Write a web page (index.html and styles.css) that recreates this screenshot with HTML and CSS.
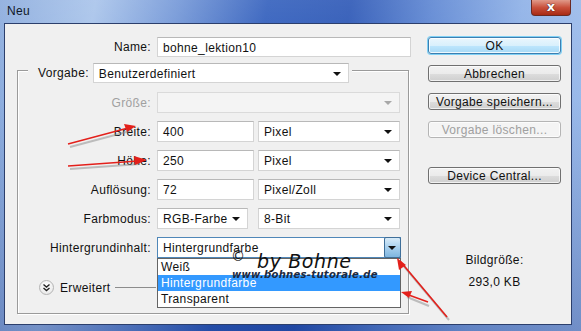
FILE: index.html
```html
<!DOCTYPE html>
<html lang="de">
<head>
  <meta charset="UTF-8">
  <title>Neu</title>
  <link rel="stylesheet" href="styles.css">
</head>
<body>
  <div class="window">
    <div class="titlebar">
      <span class="title">Neu</span>
      <div class="close"><span>x</span></div>
    </div>

    <div class="client">
      <div class="main">
        <div class="row name-row">
          <label class="lbl">Name:</label>
          <div class="input w-name">bohne_lektion10</div>
        </div>

        <div class="preset">
          <div class="preset-head">
            <label>Vorgabe:</label>
            <div class="select w-preset">Benutzerdefiniert<i class="arrow"></i></div>
          </div>

          <div class="fields">
            <div class="row">
              <label class="lbl disabled">Größe:</label>
              <div class="select off w-full"><i class="arrow"></i></div>
            </div>
            <div class="row">
              <label class="lbl">Breite:</label>
              <div class="input w-num">400</div>
              <div class="select w-unit">Pixel<i class="arrow"></i></div>
            </div>
            <div class="row">
              <label class="lbl">Höhe:</label>
              <div class="input w-num">250</div>
              <div class="select w-unit">Pixel<i class="arrow"></i></div>
            </div>
            <div class="row">
              <label class="lbl">Auflösung:</label>
              <div class="input w-num">72</div>
              <div class="select w-unit">Pixel/Zoll<i class="arrow"></i></div>
            </div>
            <div class="row">
              <label class="lbl">Farbmodus:</label>
              <div class="select w-mode">RGB-Farbe<i class="arrow"></i></div>
              <div class="select w-unit w-bit">8-Bit<i class="arrow"></i></div>
            </div>
            <div class="row">
              <label class="lbl">Hintergrundinhalt:</label>
              <div class="select open w-bg">Hintergrundfarbe<span class="drop-btn"><i class="arrow"></i></span>
                <ul class="list">
                  <li>Weiß</li>
                  <li class="sel">Hintergrundfarbe</li>
                  <li>Transparent</li>
                </ul>
              </div>
            </div>
          </div>

          <div class="advanced">
            <span class="chev">
              <svg width="9" height="9" viewBox="0 0 9 9"><path d="M1.5 1.5 L4.5 4 L7.5 1.5 M1.5 5 L4.5 7.5 L7.5 5" fill="none" stroke="#222" stroke-width="1.4"/></svg>
            </span>
            <span>Erweitert</span>
            <span class="rule"></span>
          </div>
        </div>
      </div>

      <div class="side">
        <button class="btn ok">OK</button>
        <button class="btn">Abbrechen</button>
        <button class="btn">Vorgabe speichern...</button>
        <button class="btn" disabled>Vorgabe löschen...</button>
        <button class="btn gap">Device Central...</button>
        <div class="size-label">Bildgröße:</div>
        <div class="size-value">293,0 KB</div>
      </div>
    </div>

    <div class="watermark">
      <span class="copy">©</span><span class="by">by Bohne</span>
      <span class="url">www.bohnes-tutorale.de</span>
    </div>

    <svg class="arrows" width="581" height="331" viewBox="0 0 581 331">
      <g stroke="#8a8a8a" stroke-width="2" opacity="0.5" fill="none">
        <path d="M70 147 L130 131"/>
        <path d="M70 169 L140 164"/>
        <path d="M449 320 L402 264"/>
        <path d="M429 306 L407 297"/>
      </g>
      <g stroke="#e3201b" stroke-width="1.6" fill="none">
        <path d="M68 144 L128 128"/>
        <path d="M68 166 L138 161"/>
        <path d="M447 317 L400 261"/>
        <path d="M428 302 L406 294"/>
      </g>
      <g fill="#e3201b">
        <polygon points="136,126 124,124 127,132"/>
        <polygon points="147,160 134,156 135,165"/>
        <polygon points="397,258 399,270 406,265"/>
        <polygon points="401,292 412,291 409,298"/>
      </g>
    </svg>
  </div>
</body>
</html>
```

FILE: styles.css
```css
* {
  box-sizing: border-box;
}
body {
  margin: 0;
  font-family: "Liberation Sans", Arial, sans-serif;
  font-size: 12px;
  letter-spacing: 0.35px;
  color: #111;
}
.window {
  position: relative;
  width: 581px;
  height: 331px;
  overflow: hidden;
  background:
    linear-gradient(180deg, rgba(255,255,255,0.12), rgba(0,0,0,0) 30%, rgba(20,50,130,0.35) 100%),
    linear-gradient(100deg, #88a9dc 0%, #a6c2ea 15%, #6f94d6 28%, #2d5bbb 42%, #2753b4 55%, #5a84d2 68%, #8aaee6 82%, #a3c0ec 100%);
}
.titlebar {
  height: 23px;
  display: flex;
  justify-content: space-between;
}
.title {
  padding: 4px 0 0 7px;
  font-size: 12px;
  color: #101828;
}
.close {
  width: 40px;
  height: 16px;
  margin-right: 10px;
  border: 1px solid #6b2a22;
  border-top: none;
  border-radius: 0 0 4px 4px;
  background: linear-gradient(#e09a8a, #c9503b 50%, #a82a14);
  display: flex;
  justify-content: center;
  align-items: center;
}
.close span {
  font-family: "DejaVu Sans", sans-serif;
  font-weight: bold;
  font-size: 13px;
  color: #fff;
  line-height: 1;
  margin-top: -2px;
  text-shadow: 0 0 1px #3a1a14, 0 0 1px #3a1a14;
}
.client {
  margin-left: 4px;
  width: 568px;
  height: 302px;
  background: #f0f0f0;
  border: 1px solid #2c3f6c;
  display: flex;
}
.main {
  width: 419px;
  padding-top: 12px;
}
.row {
  display: flex;
  align-items: center;
  height: 21px;
}
.lbl {
  width: 133px;
  margin-right: 6px;
  text-align: right;
  white-space: nowrap;
}
.name-row .lbl {
  width: 146px;
}
.lbl.disabled {
  color: #a0a0a0;
}
.input, .select {
  position: relative;
  height: 21px;
  background: #fff;
  border: 1px solid #d4d4d4;
  border-top-color: #b8b8b8;
  padding: 3px 0 0 5px;
  white-space: nowrap;
}
.name-row .input {
  height: 20px;
}
.w-name { width: 254px; }
.w-preset { width: 256px; }
.w-full { width: 243px; }
.w-num { width: 97px; margin-right: 4px; }
.w-unit { width: 142px; }
.w-mode { width: 91px; margin-right: 10px; }
.w-bg { width: 244px; }
.select .arrow {
  position: absolute;
  right: 7px;
  top: 8px;
  border-left: 4px solid transparent;
  border-right: 4px solid transparent;
  border-top: 4px solid #111;
}
.select.off {
  background: #f4f4f4;
  border-color: #dadada;
}
.select.off .arrow {
  border-top-color: #a8a8a8;
}
.select.open {
  border-color: #4f87b8;
}
.drop-btn {
  position: absolute;
  right: -1px;
  top: -1px;
  width: 17px;
  height: 21px;
  border: 1px solid #3f6f99;
  border-radius: 2px;
  background: linear-gradient(#d8ebf8, #a8d0ee 50%, #7fb6e0);
}
.drop-btn .arrow {
  right: 4px;
  top: 8px;
}
.list {
  position: absolute;
  left: -1px;
  top: 20px;
  width: 244px;
  height: 50px;
  margin: 0;
  padding: 0;
  list-style: none;
  background: #fff;
  border: 1px solid #646464;
  z-index: 2;
}
.list li {
  height: 16px;
  padding: 1px 0 0 3px;
}
.list li.sel {
  background: #3399ff;
  color: #fff;
}
.preset {
  margin: 13px 0 0 12px;
  width: 392px;
  height: 244px;
  border: 1px solid #9a9a9a;
  box-shadow: inset 1px 1px 0 #fff, 1px 1px 0 #fff;
}
.preset-head {
  display: flex;
  align-items: center;
  gap: 4px;
  width: fit-content;
  margin: -8px 0 0 10px;
  padding: 0 3px 0 10px;
  background: #f0f0f0;
}
.preset-head .select {
  height: 20px;
}
.fields {
  margin-top: 9px;
  display: flex;
  flex-direction: column;
  gap: 8px;
}
.advanced {
  display: flex;
  align-items: center;
  height: 15px;
  margin: 22px 0 0 21px;
}
.chev {
  width: 15px;
  height: 15px;
  margin-right: 6px;
  border-radius: 50%;
  border: 1px solid #b4b4b4;
  background: radial-gradient(circle at 50% 35%, #fff, #e4e4e4);
  display: flex;
  justify-content: center;
  align-items: center;
}
.rule {
  width: 41px;
  height: 1px;
  margin-left: 4px;
  background: #8c8c8c;
}
.side {
  width: 133px;
  margin-left: 4px;
  padding-top: 13px;
  display: flex;
  flex-direction: column;
}
.btn {
  height: 17px;
  margin: 0 0 11px;
  padding: 0;
  font: inherit;
  letter-spacing: inherit;
  color: #111;
  border: 1px solid #707070;
  border-radius: 3px;
  background: linear-gradient(#f2f2f2, #ebebeb 50%, #dddddd 51%, #cfcfcf);
  box-shadow: inset 0 0 0 1px rgba(255,255,255,0.7);
}
.btn.ok {
  border-color: #3c7fb1;
  background: linear-gradient(#eaf6fd, #d9f0fc 50%, #bee6fd 51%, #a7d9f5);
  box-shadow: 0 0 0 1px #7fd0f5, inset 0 0 0 1px rgba(255,255,255,0.8);
}
.btn:disabled {
  color: #a0a0a0;
  border-color: #b5b5b5;
  background: #f4f4f4;
}
.btn.gap {
  margin-top: 18px;
}
.size-label {
  margin-top: 58px;
  text-align: center;
}
.size-value {
  margin-top: 8px;
  text-align: center;
}
.watermark {
  position: absolute;
  left: 229px;
  top: 248px;
  width: 172px;
  height: 32px;
  font-family: "DejaVu Sans", sans-serif;
  font-style: italic;
  letter-spacing: 0;
  z-index: 3;
  color: #111;
}
.copy {
  position: absolute;
  left: 2px;
  top: 0;
  font-size: 14px;
}
.by {
  position: absolute;
  left: 28px;
  top: 2px;
  font-size: 19px;
  letter-spacing: 0.6px;
}
.url {
  position: absolute;
  left: 3px;
  top: 21px;
  font-size: 10px;
  font-weight: bold;
  color: #1d2a40;
  letter-spacing: 0.3px;
}
.arrows {
  position: absolute;
  left: 0;
  top: 0;
  pointer-events: none;
  z-index: 4;
}
```
